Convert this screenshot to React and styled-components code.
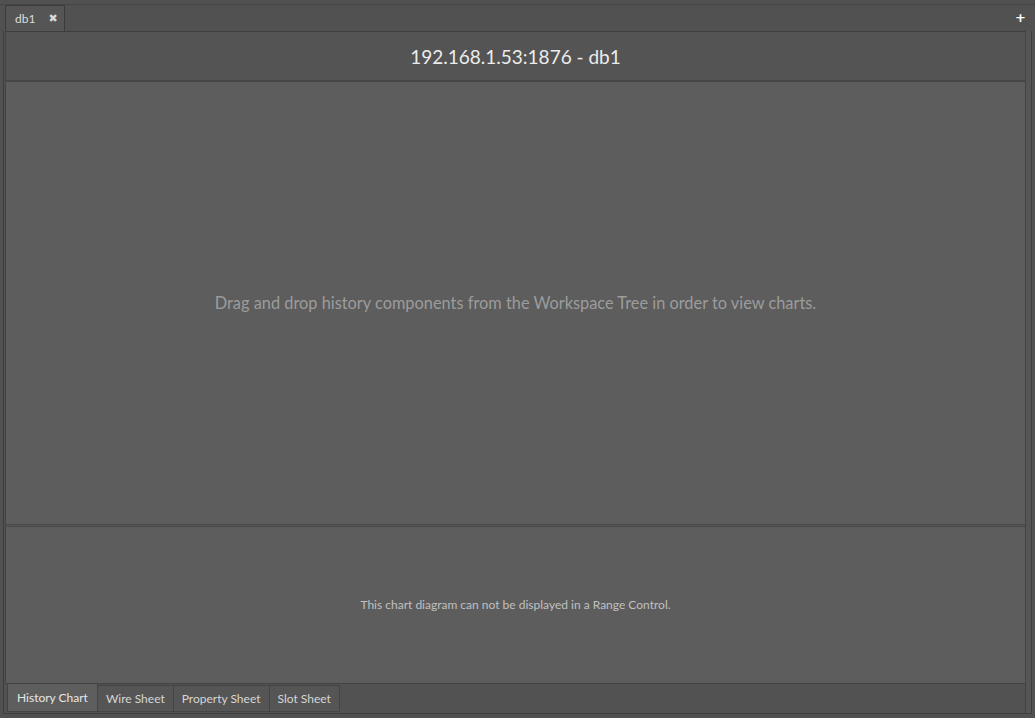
import React from "react";
import styled, { createGlobalStyle } from "styled-components";

const Global = createGlobalStyle`
  html, body { margin: 0; padding: 0; background: #515151; }
  body { font-family: Lato, "Open Sans", sans-serif; }
  * { box-sizing: border-box; }
`;

const Page = styled.div`
  width: 1035px;
  height: 718px;
  display: flex;
  flex-direction: column;
  background: #515151;
  overflow: hidden;
`;

const TabStrip = styled.div`
  height: 30px;
  margin-top: 4px;
  border-top: 1px solid #454545;
  display: flex;
  align-items: flex-end;
  padding-left: 5px;
  padding-right: 8px;
  position: relative;
`;

const DocTab = styled.div`
  height: 26px;
  width: 60px;
  background: #555555;
  border: 1px solid #3c3c3c;
  border-bottom: none;
  display: flex;
  align-items: center;
  padding-left: 9px;
  gap: 13px;
  color: #dcdcdc;
  font-size: 12px;
`;

const CloseX = styled.span`
  font-family: "DejaVu Sans", sans-serif;
  font-weight: bold;
  font-size: 11px;
  color: #d8d8d8;
`;

const Plus = styled.span`
  position: absolute;
  right: 9px;
  top: 5px;
  color: #ffffff;
  font-family: "DejaVu Sans", sans-serif;
  font-weight: bold;
  font-size: 13px;
`;

const Frame = styled.div`
  flex: 1;
  margin: 0 3px 4px 3px;
  border: 1px solid #3e3e3e;
  border-top: none;
  display: flex;
  flex-direction: column;
  padding: 0 5px 0 1px;
  background: #525252;
  box-shadow: inset -5px 0 0 #555555, inset -6px 0 0 #424242;
`;

const Content = styled.div`
  height: 653px;
  border: 1px solid #434343;
  border-top: 1px solid #3e3e3e;
  display: flex;
  flex-direction: column;
`;

const Header = styled.div`
  height: 50px;
  background: #545454;
  border-bottom: 2px solid #464646;
  display: flex;
  align-items: center;
  justify-content: center;
  color: #ececec;
  font-size: 19px;
  padding-top: 1px;
`;

const ChartArea = styled.div`
  height: 443px;
  background: #5d5d5d;
  display: flex;
  align-items: center;
  justify-content: center;
  color: #9c9c9c;
  font-size: 16.35px;
  border-bottom: 1px solid #4a4a4a;
  padding-bottom: 2px;
`;

const Splitter = styled.div`
  height: 2px;
  background: #555555;
  border-bottom: 1px solid #4a4a4a;
`;

const RangeArea = styled.div`
  flex: 1;
  background: #5d5d5d;
  display: flex;
  align-items: center;
  justify-content: center;
  color: #c0c0c0;
  font-size: 12px;
  padding-bottom: 2px;
`;

const BottomTabs = styled.div`
  display: flex;
  align-items: flex-start;
  padding-left: 2px;
  height: 29px;
`;

const SheetTab = styled.div`
  height: ${(p) => (p.$active ? "28px" : "27px")};
  padding: 0 ${(p) => (p.$active ? "9px" : "8px")};
  margin-top: ${(p) => (p.$active ? "0" : "1px")};
  display: flex;
  align-items: center;
  background: ${(p) => (p.$active ? "#5e5e5e" : "#555555")};
  border: 1px solid #444444;
  border-top: ${(p) => (p.$active ? "none" : "1px solid #444444")};
  color: ${(p) => (p.$active ? "#e6e6e6" : "#d6d6d6")};
  font-size: 12px;
  margin-right: -1px;
  padding-top: ${(p) => (p.$active ? "1px" : "0")};
  padding-bottom: 1px;
`;

export default function App() {
  const tabs = ["History Chart", "Wire Sheet", "Property Sheet", "Slot Sheet"];
  return (
    <Page>
      <Global />
      <TabStrip>
        <DocTab>
          db1 <CloseX>✖</CloseX>
        </DocTab>
        <Plus>+</Plus>
      </TabStrip>
      <Frame>
        <Content>
          <Header>192.168.1.53:1876 - db1</Header>
          <ChartArea>
            Drag and drop history components from the Workspace Tree in order to view charts.
          </ChartArea>
          <Splitter />
          <RangeArea>This chart diagram can not be displayed in a Range Control.</RangeArea>
        </Content>
        <BottomTabs>
          {tabs.map((t, i) => (
            <SheetTab key={t} $active={i === 0}>
              {t}
            </SheetTab>
          ))}
        </BottomTabs>
      </Frame>
    </Page>
  );
}
